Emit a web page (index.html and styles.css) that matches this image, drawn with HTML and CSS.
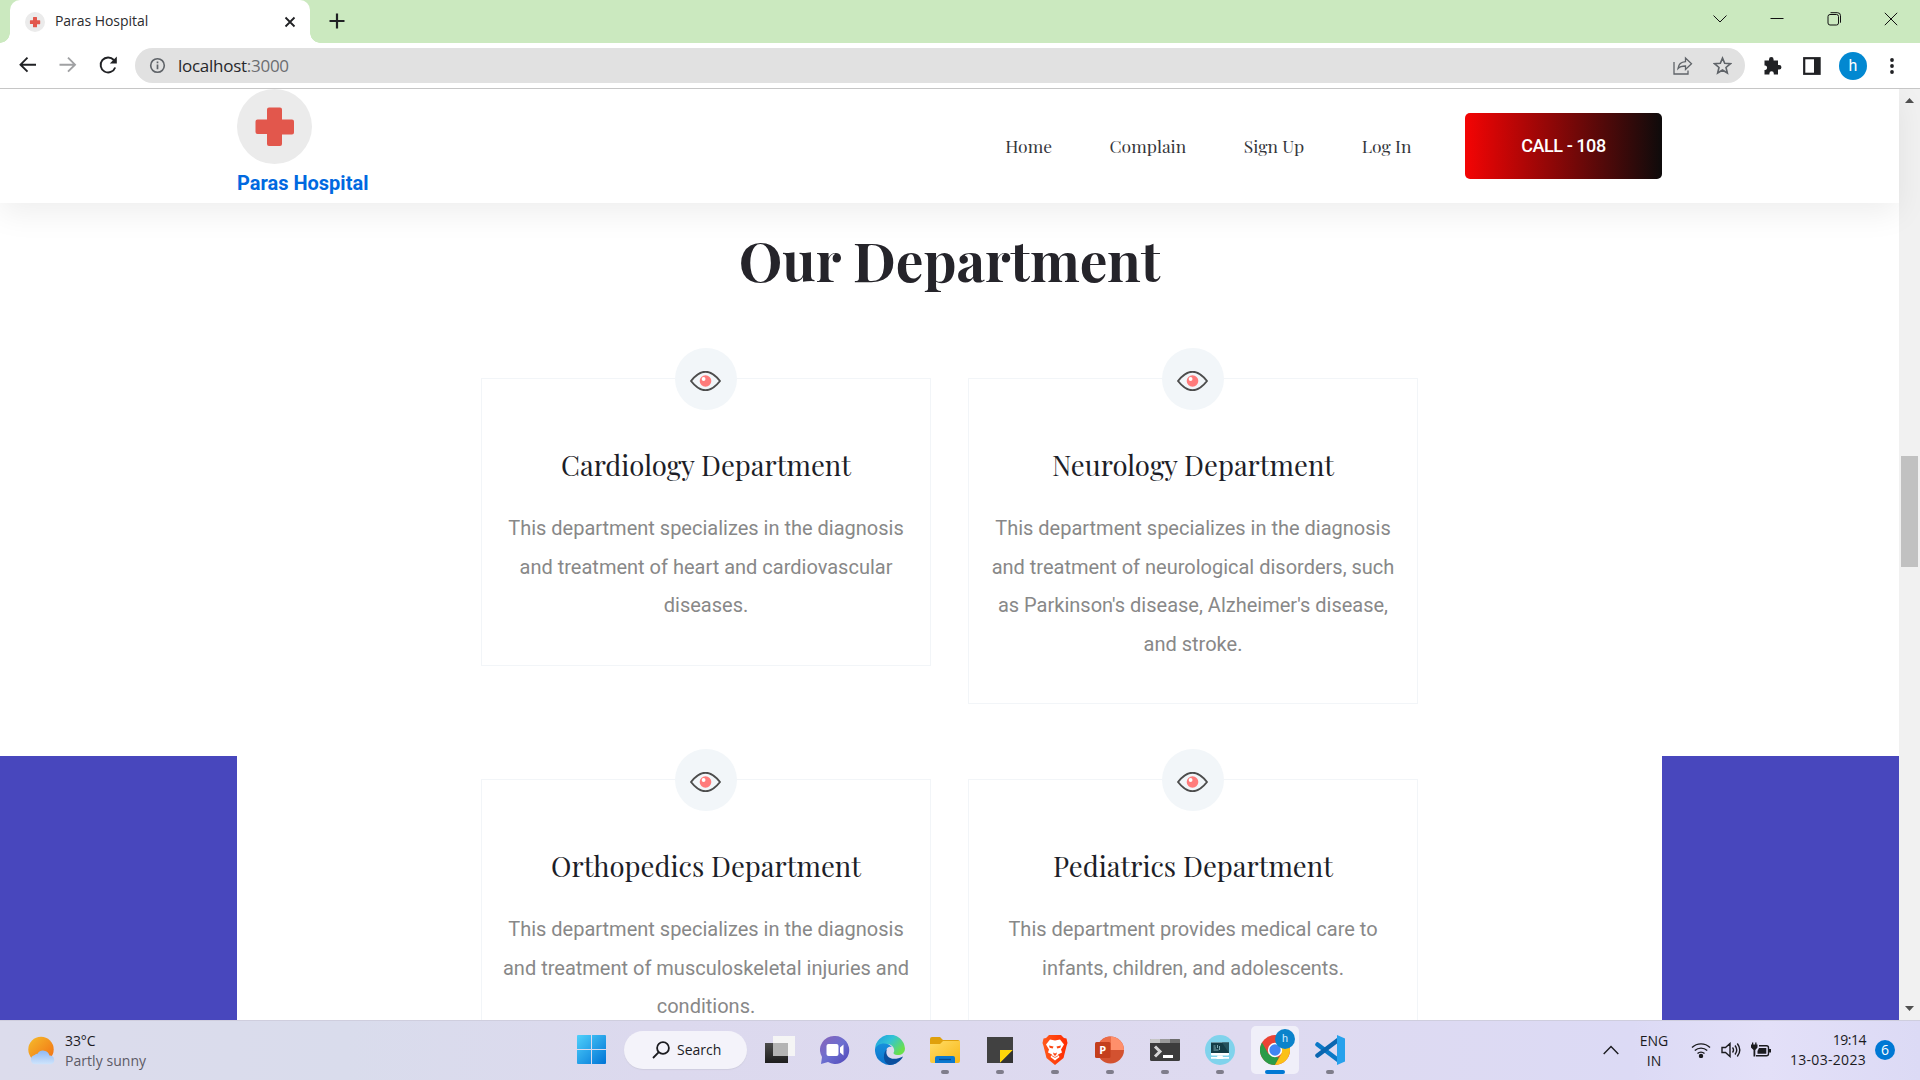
FILE: index.html
```html
<!DOCTYPE html>
<html lang="en">
<head>
<meta charset="utf-8">
<title>Paras Hospital</title>
<link rel="stylesheet" href="styles.css">
</head>
<body>
<svg width="0" height="0" class="defs">
  <defs>
    <symbol id="eye" viewBox="0 0 31 20">
      <path d="M1 10Q15.500 -8.500 30 10Q15.500 28.500 1 10Z" fill="none" stroke="#4d4d4d" stroke-width="1.900" stroke-linejoin="round"/>
      <circle cx="15.500" cy="10" r="5.800" fill="#ff7b7b"/><circle cx="13.600" cy="8" r="1.900" fill="#fff"/>
    </symbol>
    <symbol id="cross" viewBox="0 0 75 75">
      <circle cx="37.500" cy="37.500" r="37.500" fill="#ebebeb"/>
      <path d="M32 18.500h11a2 2 0 0 1 2 2v10h10a2 2 0 0 1 2 2v11a2 2 0 0 1-2 2H45v9.500a2 2 0 0 1-2 2H32a2 2 0 0 1-2-2V45H20.500a2 2 0 0 1-2-2V32.500a2 2 0 0 1 2-2H30v-10a2 2 0 0 1 2-2z" fill="#e2574c"/>
    </symbol>
    <linearGradient id="win" x1="0" y1="0" x2="1" y2="1"><stop offset="0" stop-color="#4fd0fb"/><stop offset="1" stop-color="#0074d6"/></linearGradient>
    <linearGradient id="sun" x1="0" y1="0" x2="1" y2="1"><stop offset="0" stop-color="#f5bd2b"/><stop offset="1" stop-color="#f26b12"/></linearGradient>
    <linearGradient id="cloud" x1="0" y1="0" x2="0" y2="1"><stop offset="0" stop-color="#8fb9f5"/><stop offset="1" stop-color="#cfe4fb"/></linearGradient>
    <linearGradient id="dark" x1="0" y1="0" x2="0" y2="1"><stop offset="0" stop-color="#4c4c4c"/><stop offset="1" stop-color="#1d1d1d"/></linearGradient>
    <linearGradient id="chat" x1="0" y1="0" x2="1" y2="1"><stop offset="0" stop-color="#8a63b8"/><stop offset=".5" stop-color="#6c6fd0"/><stop offset="1" stop-color="#5046b8"/></linearGradient>
    <linearGradient id="edgeTop" x1="0" y1="0" x2="1" y2=".6"><stop offset="0" stop-color="#1b9be0"/><stop offset=".5" stop-color="#32c3d6"/><stop offset="1" stop-color="#6be04a"/></linearGradient>
    <linearGradient id="edgeLow" x1="0" y1="0" x2="0" y2="1"><stop offset="0" stop-color="#1690dc"/><stop offset="1" stop-color="#0b72cc"/></linearGradient>
    <linearGradient id="folder" x1="0" y1="0" x2="1" y2="1"><stop offset="0" stop-color="#ffdc66"/><stop offset="1" stop-color="#f9b817"/></linearGradient>
    <linearGradient id="brave" x1="0" y1="0" x2="1" y2="0"><stop offset="0" stop-color="#ff5a1c"/><stop offset="1" stop-color="#ff2a00"/></linearGradient>
  </defs>
</svg>

<div class="screen">
  <div class="tabstrip">
    <div class="tab">
      <svg class="favicon"><use href="#cross"/></svg>
      <span class="tab-title">Paras Hospital</span>
      <svg class="tab-close" viewBox="0 0 12 12"><path d="M1.500 1.500l9 9M10.500 1.500l-9 9" stroke="#202124" stroke-width="1.800"/></svg>
    </div>
    <svg class="new-tab" viewBox="0 0 16 16"><path d="M8 .5v15M.5 8h15" stroke="#202124" stroke-width="2.200"/></svg>
    <div class="window-controls">
      <svg viewBox="0 0 14 14"><path d="M.5 3.500l6.500 6.500L13.500 3.500" /></svg>
      <svg viewBox="0 0 14 14"><path d="M.5 6.500h13"/></svg>
      <svg viewBox="0 0 14 14"><rect x="1" y="2.500" width="10.500" height="10.500" rx="2"/><path d="M3.500 .7h7a3 3 0 0 1 3 3v7"/></svg>
      <svg viewBox="0 0 14 14"><path d="M.8 .8l12.400 12.400M13.200 .8L.8 13.200"/></svg>
    </div>
  </div>

  <div class="toolbar">
    <div class="nav-buttons">
      <svg viewBox="0 0 20 20"><path d="M18 9.700H3M9.500 2.700l-7 7 7 7" stroke="#202124"/></svg>
      <svg viewBox="0 0 20 20"><path d="M1.500 9.700h15M10 2.700l7 7-7 7" stroke="#a0a1a3"/></svg>
      <svg viewBox="0 0 20 20"><path d="M17.200 12.500A7.500 7.500 0 1 1 15.800 5" stroke="#202124"/><path d="M18.800 1.500v7h-7z" fill="#202124"/></svg>
    </div>
    <div class="omnibox">
      <svg class="info" viewBox="0 0 18 18"><circle cx="9" cy="9" r="7.200" fill="none" stroke="#5f6368" stroke-width="1.700"/><path d="M9 8v5M9 4.800v1.800" stroke="#5f6368" stroke-width="1.800"/></svg>
      <span class="url">localhost<span class="port">:3000</span></span>
      <svg class="share" viewBox="0 0 20 20"><path d="M1 6v12h14v-3.500M5 12.500c.5-4 3-6.500 7.500-6.800V2l6 5.800-6 5.700V10c-4 0-6 .8-7.500 2.500z"/></svg>
      <svg class="star" viewBox="0 0 20 20"><path d="M10 2.200l2.300 5.500 5.900.5-4.500 3.900 1.400 5.800L10 14.800l-5.100 3.100 1.400-5.800L1.800 8.200l5.900-.5z"/></svg>
    </div>
    <div class="toolbar-actions">
      <svg viewBox="0 0 20 20"><path d="M2.500 4.500H7V3.400a2.300 2.300 0 0 1 4.600 0v1.100H16v4.400h1.200a2.200 2.200 0 0 1 0 4.500H16v5.100h-4.200v-1a2.200 2.200 0 0 0-4.400 0v1H2.500v-4.400h.8a2.300 2.300 0 0 0 0-4.500h-.8z" fill="#202124"/></svg>
      <svg viewBox="0 0 20 20"><rect x="2.200" y="2.200" width="15.400" height="15.600" fill="#fff" stroke="#202124" stroke-width="2.200"/><path d="M12 2h6v16h-6z" fill="#202124"/></svg>
      <span class="avatar">h</span>
      <svg viewBox="0 0 20 20"><circle cx="10" cy="4" r="1.900"/><circle cx="10" cy="10" r="1.900"/><circle cx="10" cy="16" r="1.900"/></svg>
    </div>
  </div>

  <div class="viewport">
    <div class="page">
      <header class="site-header">
        <a class="brand"><svg class="brand-logo"><use href="#cross"/></svg><span>Paras Hospital</span></a>
        <nav class="site-nav">
          <a>Home</a><a>Complain</a><a>Sign Up</a><a>Log In</a>
        </nav>
        <a class="call">CALL - 108</a>
      </header>
      <div class="band">
        <div class="side"></div>
        <main class="departments">
          <h1>Our Department</h1>
          <div class="cards">
            <article class="card">
              <span class="badge"><svg><use href="#eye"/></svg></span>
              <h2>Cardiology Department</h2>
              <p>This department specializes in the diagnosis and treatment of heart and cardiovascular diseases.</p>
            </article>
            <article class="card">
              <span class="badge"><svg><use href="#eye"/></svg></span>
              <h2>Neurology Department</h2>
              <p>This department specializes in the diagnosis and treatment of neurological disorders, such as Parkinson's disease, Alzheimer's disease, and stroke.</p>
            </article>
            <article class="card">
              <span class="badge"><svg><use href="#eye"/></svg></span>
              <h2>Orthopedics Department</h2>
              <p>This department specializes in the diagnosis and treatment of musculoskeletal injuries and conditions.</p>
            </article>
            <article class="card">
              <span class="badge"><svg><use href="#eye"/></svg></span>
              <h2>Pediatrics Department</h2>
              <p>This department provides medical care to infants, children, and adolescents.</p>
            </article>
          </div>
        </main>
        <div class="side"></div>
      </div>
    </div>
    <div class="scrollbar">
      <svg viewBox="0 0 9 5"><path d="M0 5l4.500-5L9 5z"/></svg>
      <div class="thumb"></div>
      <svg viewBox="0 0 9 5"><path d="M0 0l4.500 5L9 0z"/></svg>
    </div>
  </div>

  <div class="taskbar">
    <div class="weather">
      <svg viewBox="0 0 28 29"><circle cx="13" cy="13.500" r="12.700" fill="url(#sun)"/><path d="M7.500 28.300a4.700 4.700 0 0 1-.8-9.300 4 4 0 0 1 2.800-1.300 6.600 6.600 0 0 1 12 1.800 4.500 4.500 0 0 1 1.500 8.800z" fill="url(#cloud)"/></svg>
      <div class="weather-text"><span class="temp">33°C</span><span class="sky">Partly sunny</span></div>
    </div>
    <div class="apps">
      <svg class="start" viewBox="0 0 29 29"><path d="M1 0h13v14H0V1a1 1 0 0 1 1-1zM15 0h13a1 1 0 0 1 1 1v13H15zM0 15h14v14H1a1 1 0 0 1-1-1zM15 15h14v13a1 1 0 0 1-1 1H15z" fill="url(#win)"/></svg>
      <div class="search"><svg viewBox="0 0 18 18"><circle cx="11" cy="7" r="5.900"/><path d="M6.800 11.200L1 17"/></svg><span>Search</span></div>
      <div class="app"><svg viewBox="0 0 30 30"><path d="M0 8h23v20H0z" fill="url(#dark)"/><path d="M8 1h22v20H8z" fill="#f5f5f5"/><path d="M8 8h15v13H8z" fill="#b4b4b4"/></svg></div>
      <div class="app"><svg viewBox="0 0 30 30"><path d="M15 1a14 14 0 1 1-7 26l-7 2 1-7A14 14 0 0 1 15 1z" fill="url(#chat)"/><rect x="6.500" y="9" width="12" height="12" rx="2" fill="#fff"/><path d="M20 12.500l3.500-3v11l-3.500-3z" fill="#fff"/></svg></div>
      <div class="app"><svg viewBox="0 0 30 30">
        <path d="M0 14A15 15 0 0 1 29.900 13c.5 5-4 7.500-8 7-3-.3-4-1.500-3-3C21 11 12 4 0 14z" fill="url(#edgeTop)"/>
        <path d="M0 14C2 8 12 6 17 12c-5-1-6.500 3-6 7 .5 6 7 9 11 9A15 15 0 0 1 0 14z" fill="url(#edgeLow)"/>
        <path d="M12 14c-3 8 5 13 16 7.500C26 26 20 30 14.500 30 7 28 8 17 12 14z" fill="#0b4f9e"/></svg></div>
      <div class="app open"><svg viewBox="0 0 30 30"><path d="M0 4a2 2 0 0 1 2-2h8l3 3h15a2 2 0 0 1 2 2v8H0z" fill="#dfa00c"/><path d="M0 9h10l3-3h17v20a2 2 0 0 1-2 2H2a2 2 0 0 1-2-2z" fill="url(#folder)"/><path d="M5 28v-5a2 2 0 0 1 2-2h16a2 2 0 0 1 2 2v5z" fill="#0b78cf"/><path d="M9 24.500h12" stroke="#064c91" stroke-width="1.300"/></svg></div>
      <div class="app open"><svg viewBox="0 0 30 30"><path d="M2 2h26v26H2z" fill="#414141"/><path d="M15 15h13L15 28z" fill="#ffd60a"/><path d="M28 15v13H15z" fill="#333"/></svg></div>
      <div class="app open"><svg viewBox="0 0 30 30"><path d="M9 0h12l3 3 2.500.5L27.500 8l-1 3-3 12L15 30l-8.500-7-3-12-1-3 1-4.500L6 3z" fill="url(#brave)"/><path d="M10 4.500l5 1 5-1 4 5-3 5 1 3-4 2 1.500 2.500L15 25.500 10.500 22l1.500-2.500-4-2 1-3-3-5z" fill="#fff"/><path d="M9 10.500l4.500 1-.8 2-3-.8zM21 10.500l-4.500 1 .8 2 3-.8zM13 17.500l2 1 2-1-1 3h-2z" fill="#fa4715"/><path d="M11.500 20.500l3.500 2 3.500-2" fill="none" stroke="#fa4715" stroke-width=".8"/></svg></div>
      <div class="app open"><svg viewBox="0 0 30 30"><circle cx="15.500" cy="15" r="13.500" fill="#d35230"/><path d="M15.500 1.500V15H29A13.500 13.500 0 0 0 15.500 1.500z" fill="#ff8f6b"/><path d="M15.500 1.500V15H2A13.500 13.500 0 0 1 15.500 1.500z" fill="#ed6c47"/><rect x="0" y="7" width="15.500" height="16" rx="1.500" fill="#c43e1c"/><text x="7.700" y="19" text-anchor="middle" class="ppt">P</text></svg></div>
      <div class="app open"><svg viewBox="0 0 30 30"><rect y="4" width="30" height="22" rx="1.500" fill="#3c3c3c"/><path d="M1 4h9v4H0V5a1 1 0 0 1 1-1z" fill="#c6c6c6"/><path d="M10 4h10v4H10z" fill="#9a9a9a"/><path d="M20 4h9a1 1 0 0 1 1 1v3H20z" fill="#6b6b6b"/><path d="M5 11.500l5 5-5 5" stroke="#d5d5d5" stroke-width="3" fill="none"/><path d="M13 21.500h10" stroke="#fff" stroke-width="3"/></svg></div>
      <div class="app open"><svg viewBox="0 0 30 30"><circle cx="15" cy="15" r="15" fill="#80d3ec"/><rect x="6" y="7.500" width="18" height="13" rx="1" fill="#fff"/><path d="M6 7.500h18V18H6z" fill="#143c46"/><path d="M17 7.500h7V18z" fill="#24525d"/><path d="M8.500 11h2M8.500 13h2.500M8.500 15h5M12.500 10v3M14.500 11v4" stroke="#8ab5bd" stroke-width=".9"/><path d="M12.500 20.500h5l1 3.500h-7zM6 22h18v1.700H6z" fill="#fff"/></svg></div>
      <div class="app open active"><svg viewBox="0 0 30 30"><circle cx="15" cy="15" r="15" fill="#ea4335"/><path d="M2 7.500L8.500 19 15 22l4 .5L15 30A15 15 0 0 1 2 7.500z" fill="#2b9b47"/><path d="M15 8h13.300A15 15 0 0 1 15 30l6.500-11.500z" fill="#fbc116"/><circle cx="15" cy="15" r="7.200" fill="#fff"/><circle cx="15" cy="15" r="5.700" fill="#4285f4"/></svg><span class="profile">h</span></div>
      <div class="app open"><svg viewBox="0 0 30 30"><path d="M2.500 9.500L23 25" stroke="#0b79c7" stroke-width="4.500" stroke-linecap="round"/><path d="M2.500 20.500L23 5" stroke="#0a66b0" stroke-width="4.500" stroke-linecap="round"/><path d="M22 0l8 3.500v23L22 30z" fill="#27a1ec"/></svg></div>
    </div>
    <div class="tray">
      <svg class="chevron" viewBox="0 0 16 10"><path d="M.7 9L8 1.500 15.300 9"/></svg>
      <div class="lang"><span>ENG</span><span>IN</span></div>
      <svg class="wifi" viewBox="0 0 20 16"><path d="M1 5.500a13 13 0 0 1 18 0M3.800 8.600a9 9 0 0 1 12.400 0M6.500 11.500a5.200 5.200 0 0 1 7 0"/><circle cx="10" cy="14" r="1.500" fill="#1b1b1f"/></svg>
      <svg class="sound" viewBox="0 0 20 16"><path d="M1 5.500h3.500L9 1.500v13l-4.500-4H1zM11.500 5.500q2 2.500 0 5M14 3.500q3.500 4.500 0 9M16.300 1.500q5 6.500 0 13"/></svg>
      <svg class="battery" viewBox="0 0 20 16"><path d="M8 3.800h7.500a2 2 0 0 1 2 2v5.900a2 2 0 0 1-2 2H5"/><path d="M8 6h7.300v5.700H6.500V9zM18 7h2v3.500h-2zM0 2.500h6.500V5.500L4.300 8v6.500H2.500V8L0 5.500zM1 .5h1.300v2H1zM4.200 .5h1.300v2H4.200z" fill="#1b1b1f" stroke="none"/></svg>
      <div class="clock"><span class="time">19:14</span><span class="date">13-03-2023</span></div>
      <span class="count">6</span>
    </div>
  </div>
</div>
</body>
</html>
```

FILE: styles.css
```css
* { box-sizing: border-box; }
body { margin: 0; background: #fff; font-family: "Open Sans", "Noto Sans", sans-serif; }
.defs { display: block; }
svg { display: block; flex: none; }
.screen { width: 1920px; height: 1080px; overflow: hidden; display: flex; flex-direction: column; }

.tabstrip { height: 43px; flex: none; background: #cbe9bf; display: flex; align-items: flex-start; padding-left: 10px; }
.tab { position: relative; width: 300px; height: 43px; background: #fff; border-radius: 10px 10px 0 0; display: flex; align-items: center; padding: 0 14px 0 15px; }
.tab::before, .tab::after { content: ""; position: absolute; bottom: 0; width: 10px; height: 10px; }
.tab::before { left: -10px; background: radial-gradient(circle at 0 0, #cbe9bf 9.500px, #fff 10px); }
.tab::after { right: -10px; background: radial-gradient(circle at 100% 0, #cbe9bf 9.500px, #fff 10px); }
.favicon { width: 20px; height: 20px; }
.tab-title { margin-left: 10px; margin-top: -2px; font-size: 14px; letter-spacing: -.05px; color: #2b2b2e; white-space: nowrap; }
.tab-close { width: 12px; height: 12px; margin-left: auto; }
.new-tab { width: 16px; height: 16px; margin: 13px 0 0 19px; }
.window-controls { display: flex; gap: 43px; margin: 12px 22px 0 auto; }
.window-controls svg { width: 14px; height: 14px; fill: none; stroke: #111; stroke-width: 1; }

.toolbar { height: 46px; flex: none; display: flex; align-items: center; background: #fff; border-bottom: 1px solid #c6c6c6; padding-left: 18px; }
.nav-buttons { display: flex; gap: 20px; width: 117px; margin-top: -1px; }
.nav-buttons svg { width: 20px; height: 20px; fill: none; stroke-width: 1.900; }
.omnibox { width: 1610px; height: 35px; border-radius: 18px; background: #e1e1e1; display: flex; align-items: center; padding: 0 13px 0 14px; }
.info { width: 17px; height: 17px; }
.url { margin-left: 12px; font-size: 17px; letter-spacing: -.27px; color: #27282b; }
.port { color: #6c6d70; }
.share { width: 20px; height: 20px; margin-left: auto; fill: none; stroke: #5f6368; stroke-width: 1.300; }
.star { width: 19px; height: 19px; margin-left: 20px; fill: none; stroke: #5f6368; stroke-width: 1.700; }
.toolbar-actions { display: flex; align-items: center; margin-left: 17px; }
.toolbar-actions svg { width: 20px; height: 20px; margin-right: 20px; fill: #202124; }
.toolbar-actions svg:last-child { margin: 0 0 0 15px; }
.avatar { width: 28px; height: 28px; margin-left: -3px; border-radius: 50%; background: #0288d1; color: #fff; font: 16px/28px Roboto, sans-serif; text-align: center; }

.viewport { height: 931px; flex: none; display: flex; overflow: hidden; }
.page { width: 1899px; }
.site-header { position: relative; z-index: 2; height: 114px; padding: 0 237px; background: #fff; display: flex; align-items: center; box-shadow: 0 10px 30px rgba(0, 0, 0, .07); }
.brand { align-self: flex-start; display: flex; flex-direction: column; color: #0069e0; font: bold 20px/38px Roboto, sans-serif; }
.brand-logo { width: 75px; height: 75px; }
.site-nav { display: flex; gap: 57.500px; margin-left: auto; margin-right: 53.500px; font: 17.500px/24px "Playfair Display", "Liberation Serif", serif; color: #36373c; white-space: nowrap; }
.call { width: 197px; height: 66px; border-radius: 5px; background: linear-gradient(90deg, #f40404, #0e0b0b); color: #fff; font: 500 18px/65px Roboto, sans-serif; text-align: center; letter-spacing: -.45px; }

.band { height: 817px; display: flex; }
.side { width: 237px; margin-top: 553px; background: #4847bd; }
.departments { width: 1425px; padding: 16px 244px 0; color: #25242a; }
h1 { margin: 0; font: bold 55px/80px "Playfair Display", "Liberation Serif", serif; text-align: center; white-space: nowrap; }
.cards { margin-top: 79px; display: grid; grid-template-columns: 450px 450px; gap: 75px 37px; align-items: start; }
.card { position: relative; border: 1px solid #f2f5f8; padding: 66px 18px 31px; text-align: center; }
.badge { position: absolute; left: 193px; top: -31px; width: 62px; height: 62px; border-radius: 50%; background: #f2f6f9; display: flex; align-items: center; justify-content: center; }
.badge svg { width: 31px; height: 20px; margin: 3px 1px 0 0; }
h2 { margin: 0; font: 27.500px/40px "Playfair Display", "Liberation Serif", serif; color: #1d1e28; white-space: nowrap; }
.card p { margin: 24px 0 9px; font: 20px/38.500px Roboto, sans-serif; color: #888; }

.scrollbar { width: 21px; background: #f1f1f1; display: flex; flex-direction: column; align-items: center; padding: 9px 0; }
.scrollbar svg { width: 9px; height: 5px; fill: #505050; }
.thumb { width: 17px; height: 111px; margin: 353px 0 auto; background: #c1c1c1; }

.taskbar { height: 60px; flex: none; display: flex; align-items: center; border-top: 1px solid #cfcede; background: linear-gradient(90deg, #dcdcec, #d9dcec 18%, #dcd9ee 34%, #dedaf0 65%, #dcdaf5 85%, #e3e0f8 92%, #dcdaf5); color: #1b1b1f; font-size: 15px; }
.weather { width: 577px; display: flex; align-items: center; padding-left: 28px; }
.weather svg { width: 28px; height: 29px; }
.weather-text { display: flex; flex-direction: column; margin-left: 9px; font-size: 14px; line-height: 20px; }
.temp { letter-spacing: -.1px; }
.sky { color: #5b5a65; letter-spacing: .05px; }
.apps { display: flex; align-items: center; margin-top: -2px; }
.start { width: 29px; height: 29px; }
.search { width: 123px; height: 38px; margin: 0 5px 0 18px; border-radius: 19px; background: #f4f3fa; box-shadow: 0 1px 1px #cfcddf; display: flex; align-items: center; padding-left: 28px; gap: 7px; font-size: 14px; }
.search svg { width: 18px; height: 18px; fill: none; stroke: #1b1b1f; stroke-width: 1.800; }
.app { position: relative; width: 55px; height: 48px; display: flex; align-items: center; justify-content: center; }
.app svg { width: 30px; height: 30px; position: relative; z-index: 1; }
.open::after { content: ""; position: absolute; left: 23.500px; bottom: 0; width: 8px; height: 4px; border-radius: 2px; background: #7f7d8b; }
.active::before { content: ""; position: absolute; left: 3.500px; top: 0; width: 48px; height: 48px; border-radius: 5px; background: #f0eff9; }
.active::after { left: 17.500px; width: 20px; background: #0078d4; }
.profile { position: absolute; z-index: 2; left: 28px; top: 3px; width: 20px; height: 20px; border-radius: 50%; background: #0b83cb; color: #cfeaff; font: 11px/20px Roboto, sans-serif; text-align: center; }
.ppt { font: bold 11px "Open Sans", sans-serif; fill: #fff; }
.tray { display: flex; align-items: center; margin-left: auto; padding-right: 25px; font-size: 14px; line-height: 20px; margin-top: -2px; }
.tray svg { fill: none; stroke: #1b1b1f; stroke-width: 1.400; }
.chevron { width: 16px; height: 10px; }
.lang { width: 70px; display: flex; flex-direction: column; align-items: center; margin-top: 2px; }
.wifi, .sound, .battery { width: 20px; height: 16px; }
.wifi { margin-left: 2px; }
.sound, .battery { margin-left: 10px; }
.clock { width: 95px; display: flex; flex-direction: column; align-items: flex-end; }
.time { letter-spacing: -.5px; }
.date { letter-spacing: .3px; }
.count { width: 20px; height: 20px; margin-left: 9px; border-radius: 50%; background: #0078d4; color: #fff; font-size: 14px; text-align: center; }
```
